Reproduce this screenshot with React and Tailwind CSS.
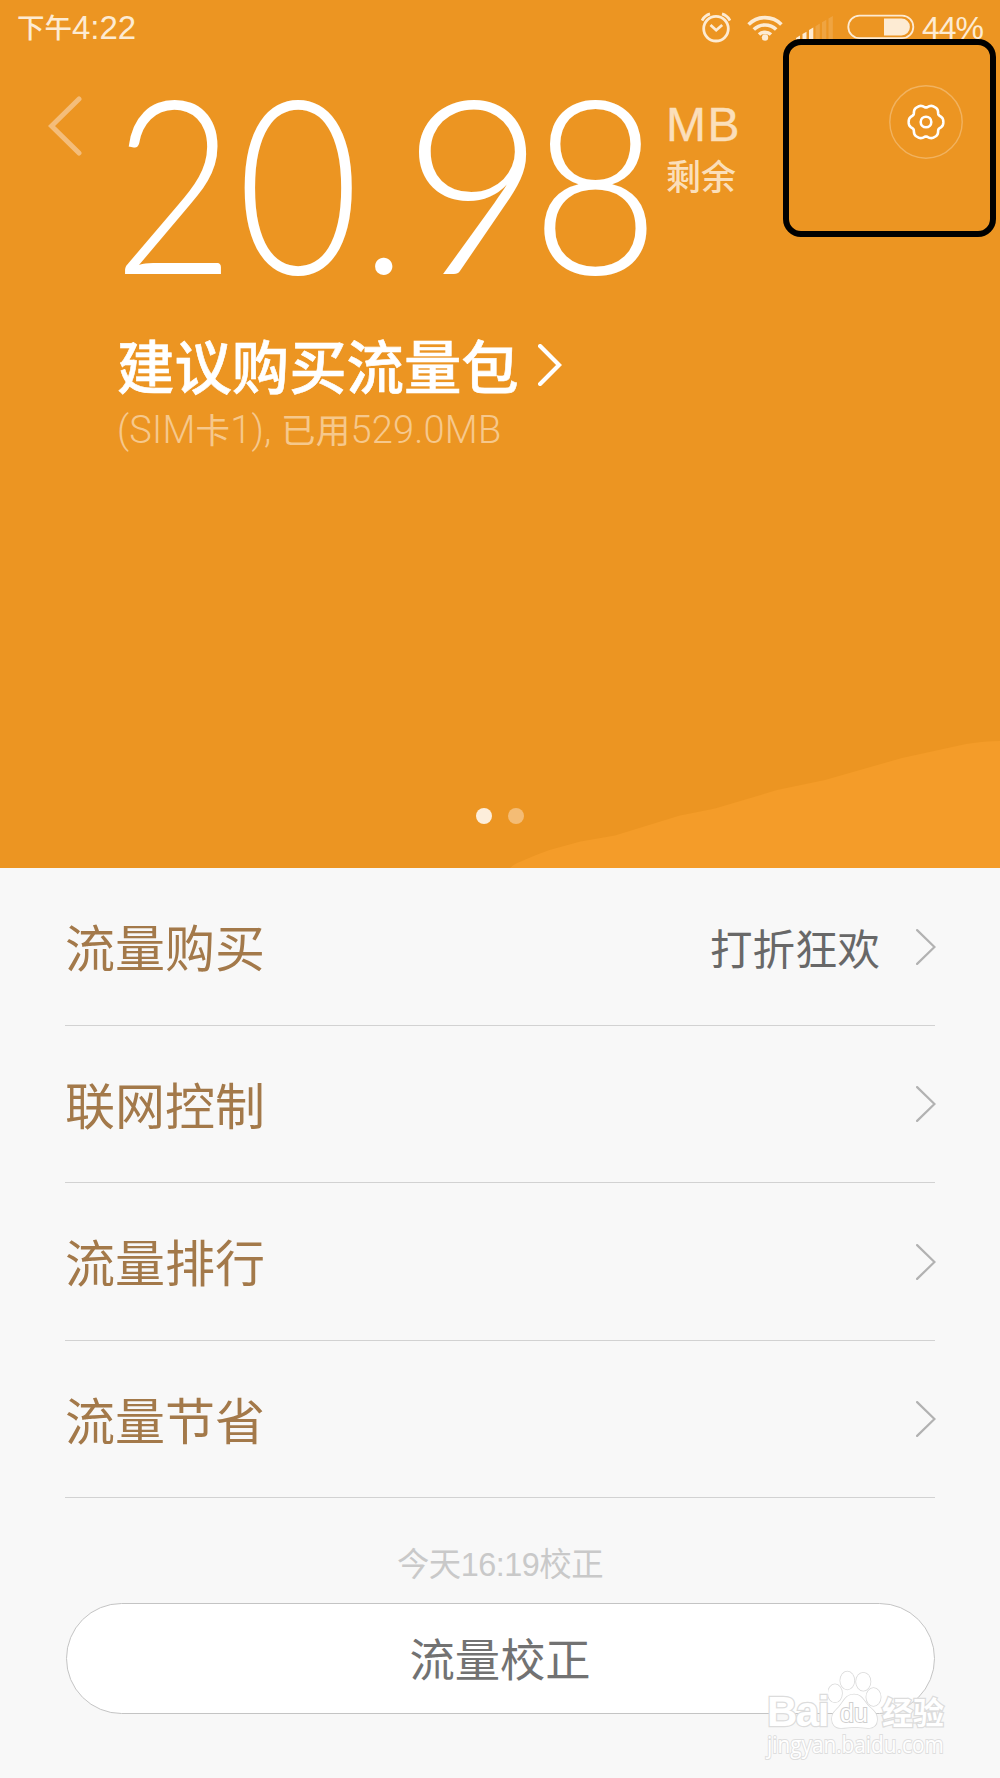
import React from "react";

const SANS = "font-['Liberation_Sans','Noto_Sans_CJK_SC',sans-serif]";

const gearPath =
  Array.from({ length: 120 }, (_, i) => {
    const t = (i / 120) * Math.PI * 2;
    const r = 16.25 + 1.4 * Math.cos(6 * t) - 0.35 * Math.cos(12 * t);
    return `${i ? "L" : "M"}${(37 + r * Math.cos(t)).toFixed(2)} ${(37 + r * Math.sin(t)).toFixed(2)}`;
  }).join("") + "Z";

const rows = [
  { title: "流量购买", note: "打折狂欢", size: "h-[158px]" },
  { title: "联网控制", size: "h-[157px]" },
  { title: "流量排行", size: "h-[158px]" },
  { title: "流量节省", size: "h-[157px]" },
];

function StatusBar() {
  return (
    <div className="flex h-[54px] items-center justify-between pl-[17px] pr-[17px] text-[#fdebd3]">
      <div className="flex items-center leading-none">
        <span className="pt-[3px] text-[27.500px] font-medium">下午</span>
        <span className="text-[33px]">4:22</span>
      </div>
      <div className="flex items-center">
        <svg width="30" height="32" viewBox="0 0 30 32" fill="none" stroke="currentColor" strokeWidth="2.8">
          <circle cx="15" cy="17.7" r="12.3" />
          <path d="M9.5 14l5.7 5.2 6-5.2" />
          <path d="M1 9.5Q3.5 4.5 9 2.8M29 9.5Q26.500 4.500 21 2.800" />
        </svg>
        <svg className="ml-4" width="36" height="32" viewBox="0 0 36 32" fill="none" stroke="currentColor" strokeWidth="3.6">
          <path d="M1.600 13.500a23 23 0 0 1 32.800 0" />
          <path d="M6.800 18.500a16 16 0 0 1 22.400 0" />
          <path d="M12 23.500a9 9 0 0 1 12 0" />
          <circle cx="18" cy="26.500" r="3.200" fill="currentColor" stroke="none" />
        </svg>
        <svg className="ml-[12px]" width="38" height="32" viewBox="0 0 38 32" fill="currentColor">
          <path d="M1 27l4-2.500v4H1zM7.500 23l4-2.300v8h-4zM14 19l4.300-2.500v12H14z" />
          <path d="M20.500 15.200l4.300-2.600v16h-4.300zM27 11.300l4.300-2.600v19.800H27zM33.500 7.500l4.300-2.600v23.600h-4.300z" opacity=".18" />
        </svg>
        <svg className="ml-[14px]" width="68" height="28" viewBox="0 0 68 28">
          <rect x="1.300" y="2.600" width="65" height="22.500" rx="11.200" fill="none" stroke="currentColor" strokeWidth="1.800" />
          <path d="M37 5.600h17.500a8.400 8.400 0 0 1 0 16.800H37z" fill="currentColor" />
        </svg>
        <span className="ml-[7px] mt-[2px] text-[32px] leading-none tracking-[-1px]">44%</span>
      </div>
    </div>
  );
}

function Chevron({ className, width, height, stroke }) {
  return (
    <svg className={className} width={width} height={height} viewBox={`0 0 ${width} ${height}`} fill="none" stroke="currentColor" strokeWidth={stroke} strokeLinecap="round">
      <path d={`M${stroke / 2} ${stroke / 2}L${width - stroke * 0.7} ${height / 2}L${stroke / 2} ${height - stroke / 2}`} />
    </svg>
  );
}

function Hero() {
  return (
    <section className="relative h-[868px] bg-[#ec9522]">
      <svg className="absolute bottom-0 right-0" width="490" height="128" viewBox="510 740 490 128">
        <path d="M510 868Q514 864 522 861Q535 855 549.500 850L580.500 841.500L615 835.500L680 815.500L715 808.500L777 790L825 780L902 758L966 744Q985 741 1000 741V868Z" fill="#f49c29" />
      </svg>
      <StatusBar />
      <div className="flex h-[270px] pt-[42px] pl-12">
        <svg className="shrink-0 text-[#f4bd7a]" width="34" height="60" viewBox="0 0 34 60" fill="none" stroke="currentColor" strokeWidth="5" strokeLinecap="round">
          <path d="M31 3L3.500 30L31 57" />
        </svg>
        <div className="-mt-[26px] ml-[31px] flex h-[220px] w-[549px] items-baseline whitespace-nowrap text-[244px] font-light leading-[220px] text-white font-['Lato',sans-serif]">
          <span className="w-[123.500px] shrink-0"><span className="inline-block origin-left scale-x-[0.86]">2</span></span>
          <span className="w-[125.500px] shrink-0"><span className="inline-block origin-left scale-x-[0.865]">0</span></span>
          <span className="w-[41px] shrink-0 text-[186px]">.</span>
          <span className="w-[127.500px] shrink-0"><span className="inline-block origin-left">9</span></span>
          <span className="w-[120px] shrink-0"><span className="inline-block origin-left scale-x-[0.91]">8</span></span>
        </div>
        <div className="ml-[4px] w-[77px] text-[#fbdfba]">
          <div className="mt-[2px] text-[48px] leading-[54px] tracking-[1.500px] [-webkit-text-stroke:0.4px_#fbdfba]">MB</div>
          <div className="mt-[1px] text-[35px] font-medium leading-[50px]">剩余</div>
        </div>
        <button className="ml-[146px] -mt-[11px] h-[74px] w-[74px] shrink-0 text-white" aria-label="settings">
          <svg width="74" height="74" viewBox="0 0 74 74" fill="none" stroke="currentColor">
            <circle cx="37" cy="37" r="36.200" strokeWidth="1.400" opacity=".28" />
            <path d={gearPath} strokeWidth="2.600" />
            <circle cx="37" cy="37" r="5.300" strokeWidth="2.600" />
          </svg>
        </button>
      </div>
      <div className="mt-[4px] pl-[117px]">
        <div className="flex h-[80px] items-center text-white">
          <span className="pt-[1px] text-[57.4px] font-medium leading-[80px] [-webkit-text-stroke:0.6px_white]">建议购买流量包</span>
          <Chevron className="-mt-[6px] ml-[19px]" width={24} height={42} stroke={4.2} />
        </div>
        <p className="-mt-[3px] text-[38px] font-light leading-[50px] tracking-[0.2px] text-[#f6c88c] font-['Roboto','Noto_Sans_CJK_SC',sans-serif]">
          (SIM<span className="text-[34.500px] font-normal">卡</span>1), <span className="text-[34.500px] font-normal">已用</span>529.0MB
        </p>
      </div>
      <div className="absolute left-[476px] top-[808px] flex gap-4">
        <i className="size-4 rounded-full bg-[#fdeedb]" />
        <i className="size-4 rounded-full bg-[#f4bc75]" />
      </div>
      <div className="absolute left-[783px] top-[39px] h-[198px] w-[213px] rounded-[18px] border-[6.500px] border-black" />
    </section>
  );
}

function Watermark() {
  return (
    <div className="absolute left-[767px] top-[1670px] h-[90px] w-[182px] text-white [-webkit-text-stroke:2.500px_#dcdcdc] [paint-order:stroke]">
      <div className="flex h-[60px] items-end">
        <span className="w-[61px] text-[42px] font-bold leading-[36px] tracking-[-1.500px]">Bai</span>
        <div className="relative h-[60px] w-[54px]">
          <svg width="54" height="60" viewBox="0 0 54 60" fill="#fff" stroke="#dadada" strokeWidth="1.600">
            <ellipse cx="7" cy="23.300" rx="7" ry="9" />
            <ellipse cx="19.300" cy="10.500" rx="7" ry="9" />
            <ellipse cx="35.300" cy="11.700" rx="7.200" ry="9" />
            <ellipse cx="45.500" cy="27" rx="7.200" ry="9" />
            <path d="M26 24.500c8 0 9 6 15 12 6 5 8 8 8 13 0 6-4 8.500-9 8.500-4 0-8-1-13-1s-9 1-14 1c-6 0-9-4-9-9s2-7 7-12c5-6 7-12.500 15-12.500z" />
          </svg>
          <span className="absolute left-[12px] top-[31px] text-[25px] leading-[24px] [-webkit-text-stroke:2px_#cfcfcf]">du</span>
        </div>
        <span className="text-[31px] font-bold leading-[32px]">经验</span>
      </div>
      <div className="origin-left scale-x-[0.865] whitespace-nowrap text-[24px] leading-[27px] [-webkit-text-stroke:2px_#dedede] font-['Open_Sans',sans-serif]">jingyan.baidu.com</div>
    </div>
  );
}

export default function App() {
  return (
    <main className={`relative h-[1778px] w-[1000px] overflow-hidden bg-[#f8f8f8] ${SANS}`}>
      <Hero />
      <ul className="px-[65px]">
        {rows.map((row) => (
          <li key={row.title} className={`flex items-center border-b border-[#d2d2d2] ${row.size}`}>
            <span className="pt-[7px] text-[50px] leading-[60px] text-[#a3794a]">{row.title}</span>
            {row.note && <span className="ml-auto mr-[36px] pt-[8px] text-[42.500px] leading-[60px] text-[#686868]">{row.note}</span>}
            <Chevron className={row.note ? "-mr-px text-[#b2b2b2]" : "ml-auto -mr-px text-[#b2b2b2]"} width={20} height={36} stroke={2.2} />
          </li>
        ))}
      </ul>
      <p className="mt-[44px] text-center text-[32.400px] leading-[46px] tracking-[-0.5px] text-[#c9c9c9]">今天16:19校正</p>
      <button className="mx-auto mt-[15px] flex h-[111px] w-[869px] items-center justify-center rounded-full border border-[#c4c4c4] bg-white pt-[7px] text-[45.300px] text-[#727272]">流量校正</button>
      <Watermark />
    </main>
  );
}
